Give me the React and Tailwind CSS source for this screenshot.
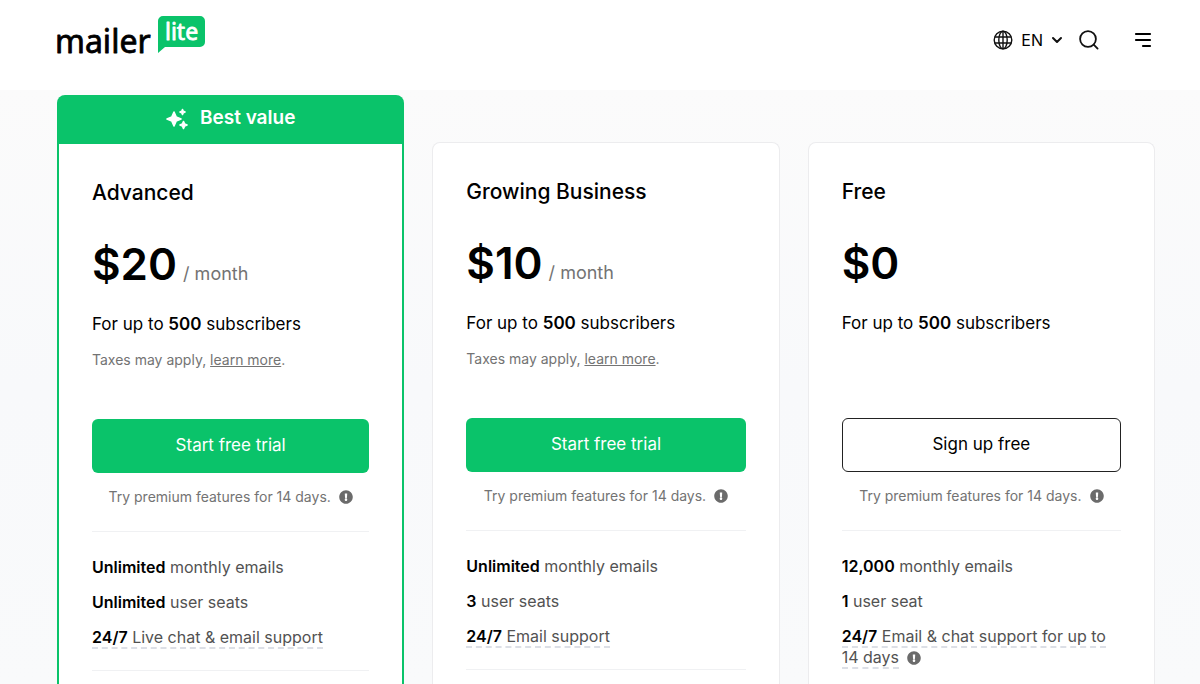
import { FaExclamationCircle } from 'react-icons/fa';

const plans = [
  {
    name: 'Advanced',
    price: '$20',
    perMonth: true,
    featured: true,
    cta: 'Start free trial',
    features: [
      { value: 'Unlimited', label: 'monthly emails' },
      { value: 'Unlimited', label: 'user seats' },
      { value: '24/7', label: 'Live chat & email support', hint: true },
    ],
    divider: true,
  },
  {
    name: 'Growing Business',
    price: '$10',
    perMonth: true,
    cta: 'Start free trial',
    features: [
      { value: 'Unlimited', label: 'monthly emails' },
      { value: '3', label: 'user seats' },
      { value: '24/7', label: 'Email support', hint: true },
    ],
    divider: true,
  },
  {
    name: 'Free',
    price: '$0',
    cta: 'Sign up free',
    outline: true,
    features: [
      { value: '12,000', label: 'monthly emails' },
      { value: '1', label: 'user seat' },
      { value: '24/7', label: 'Email & chat support for up to 14 days', hint: true, info: true },
    ],
  },
];

function Logo() {
  return (
    <svg width="156" height="60" viewBox="-4 -8 156 60" role="img" aria-label="MailerLite">
      <path
        d="M107 0h37a5 5 0 0 1 5 5v21a5 5 0 0 1-5 5h-35l-7 6V5a5 5 0 0 1 5-5z"
        fill="#0ac36a"
      />
      <text
        x="-1"
        y="37"
        fontFamily="'Noto Sans', sans-serif"
        fontSize="32"
        fill="#000"
        stroke="#000"
        strokeWidth="0.8"
        strokeLinejoin="round"
      >
        mailer
      </text>
      <text
        x="109"
        y="24"
        fontFamily="'Noto Sans', sans-serif"
        fontSize="23"
        fill="#fff"
        stroke="#fff"
        strokeWidth="0.8"
        strokeLinejoin="round"
      >
        lite
      </text>
    </svg>
  );
}

function GlobeIcon() {
  return (
    <svg width="20" height="20" viewBox="0 0 20 20" fill="none" stroke="#111" strokeWidth="1.4">
      <circle cx="10" cy="10" r="8.8" />
      <ellipse cx="10" cy="10" rx="4.2" ry="8.8" />
      <path d="M10 1.2v17.6M1.8 7h16.4M1.8 13h16.4" />
    </svg>
  );
}

function SparklesIcon() {
  return (
    <svg width="22" height="22" viewBox="0 0 22 22" fill="#fff" stroke="#fff" strokeLinejoin="round">
      <path d="M8 4l2.1 4.9L15 11l-4.9 2.1L8 18l-2.1-4.9L1 11l4.9-2.1z" strokeWidth="1.6" />
      <path d="M16.5 1.4l.8 1.8 1.8.8-1.8.8-.8 1.8-.8-1.8-1.8-.8 1.8-.8z" strokeWidth="1.4" />
      <path d="M17.5 13.4l1.1 2.5 2.5 1.1-2.5 1.1-1.1 2.5-1.1-2.5-2.5-1.1 2.5-1.1z" strokeWidth="1.4" />
    </svg>
  );
}

function Header() {
  return (
    <header className="flex h-[90px] items-start justify-between bg-white pt-2 pr-12 pl-[52px]">
      <a href="#home">
        <Logo />
      </a>
      <nav className="flex h-16 items-center">
        <button type="button" className="flex items-center gap-2 text-base text-black">
          <GlobeIcon />
          EN
          <svg width="12" height="8" viewBox="0 0 12 8" fill="none" stroke="#111" strokeWidth="2">
            <path d="M2 2l4 4 4-4" strokeLinecap="round" strokeLinejoin="round" />
          </svg>
        </button>
        <button type="button" aria-label="Search" className="ml-4">
          <svg width="20" height="20" viewBox="0 0 20 20" fill="none" stroke="#111" strokeWidth="1.8">
            <circle cx="9" cy="9" r="7.9" />
            <path d="M14.7 14.7l3.9 3.9" strokeLinecap="round" />
          </svg>
        </button>
        <button type="button" aria-label="Menu" className="ml-[35px]">
          <svg width="18" height="16" viewBox="0 0 18 16" stroke="#000" strokeWidth="2.2" strokeLinecap="round">
            <path d="M2 2h14M2 8h14M9 14h7" />
          </svg>
        </button>
      </nav>
    </header>
  );
}

function Feature({ value, label, hint, info }) {
  return (
    <li>
      <span className={hint ? 'border-b-2 border-dashed border-[#dcdfe6]' : ''}>
        <strong className="font-semibold text-black">{value}</strong> {label}
      </span>
      {info && <FaExclamationCircle className="ml-2 inline-block align-[-2px] text-sm text-[#6b6b6b]" />}
    </li>
  );
}

function PlanCard({ plan }) {
  const frame = plan.featured
    ? 'border-x-2 border-[#0ac36a]'
    : 'mt-[47px] rounded-t-lg border border-b-0 border-[#ececee]';
  const button = plan.outline
    ? 'border border-[#222] bg-white text-black'
    : 'bg-[#0ac36a] text-white';

  return (
    <article className="flex flex-col">
      {plan.featured && (
        <div className="flex h-[49px] items-center justify-center gap-3 rounded-t-lg bg-[#0ac36a] pb-0.5 text-[19px] font-semibold text-white">
          <SparklesIcon />
          Best value
        </div>
      )}
      <div className={`flex-1 bg-white px-[33px] pt-[35px] ${frame}`}>
        <h2 className="text-[21px] leading-7 font-medium text-black">{plan.name}</h2>
        <p className="mt-[29px] flex items-baseline gap-1.5 text-[#737373]">
          <span className="text-[44px] leading-14 font-semibold text-black">{plan.price}</span>
          {plan.perMonth && <span className="text-lg">/ month</span>}
        </p>
        <p className="mt-5 text-[17px] leading-6 text-black">
          For up to <strong className="font-semibold">500</strong> subscribers
        </p>
        <p className="mt-3.5 min-h-5 text-sm text-[#737373]">
          {plan.perMonth && (
            <>
              Taxes may apply, <a href="#taxes" className="underline">learn more</a>.
            </>
          )}
        </p>
        <button type="button" className={`mt-[49px] h-[54px] w-full rounded-md text-[17px] ${button}`}>
          {plan.cta}
        </button>
        <p className="mt-3.5 flex items-center justify-center gap-2 text-sm text-[#737373]">
          Try premium features for 14 days.
          <FaExclamationCircle className="text-[#6b6b6b]" />
        </p>
        <ul className="mt-6 flex flex-col gap-3.5 border-t border-[#f0f1f3] pt-[25px] text-base leading-[21px] text-[#525252]">
          {plan.features.map((feature) => (
            <Feature key={feature.label} {...feature} />
          ))}
        </ul>
        {plan.divider && <hr className="mt-[22px] border-[#f0f1f3]" />}
      </div>
    </article>
  );
}

export default function App() {
  return (
    <div className="flex min-h-screen flex-col bg-white font-['Inter',sans-serif]">
      <Header />
      <main className="grid flex-1 grid-cols-3 gap-7 bg-linear-to-b from-[#fbfbfb] via-[#f8f9fb] to-[#f9fafb] pt-[5px] pr-[45px] pl-[57px]">
        {plans.map((plan) => (
          <PlanCard key={plan.name} plan={plan} />
        ))}
      </main>
    </div>
  );
}
